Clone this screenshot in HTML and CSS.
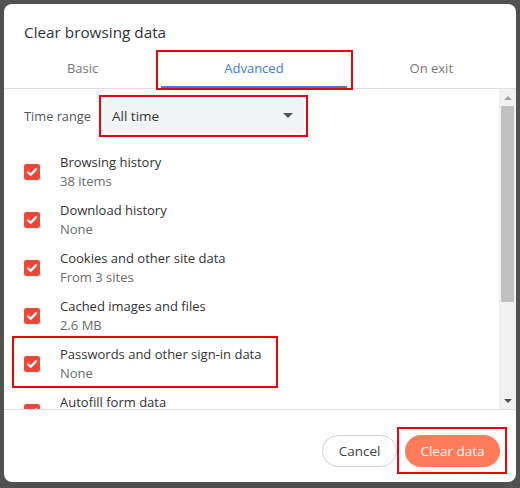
FILE: index.html
```html
<!DOCTYPE html>
<html lang="en">
<head>
  <meta charset="UTF-8" />
  <title>Clear browsing data</title>
  <link rel="stylesheet" href="styles.css">
</head>
<body>
  <div class="dialog">
    <div class="dialog-title">Clear browsing data</div>

    <div class="tabs">
      <div class="tab">Basic</div>
      <div class="tab active">Advanced<span class="mark mark-tab"></span></div>
      <div class="tab">On exit</div>
    </div>

    <div class="dialog-body">
      <div class="list">
        <div class="range-row">
          <span class="range-label">Time range</span>
          <div class="select">
            <span>All time</span>
            <span class="caret"></span>
            <span class="mark mark-select"></span>
          </div>
        </div>

        <div class="item">
          <span class="check"><svg viewBox="0 0 16 16"><path d="M4 8.3l2.6 2.5L12 5.4"/></svg></span>
          <div class="item-text"><div>Browsing history</div><div class="sub">38 items</div></div>
        </div>
        <div class="item">
          <span class="check"><svg viewBox="0 0 16 16"><path d="M4 8.3l2.6 2.5L12 5.4"/></svg></span>
          <div class="item-text"><div>Download history</div><div class="sub">None</div></div>
        </div>
        <div class="item">
          <span class="check"><svg viewBox="0 0 16 16"><path d="M4 8.3l2.6 2.5L12 5.4"/></svg></span>
          <div class="item-text"><div>Cookies and other site data</div><div class="sub">From 3 sites</div></div>
        </div>
        <div class="item">
          <span class="check"><svg viewBox="0 0 16 16"><path d="M4 8.3l2.6 2.5L12 5.4"/></svg></span>
          <div class="item-text"><div>Cached images and files</div><div class="sub">2.6 MB</div></div>
        </div>
        <div class="item">
          <span class="check"><svg viewBox="0 0 16 16"><path d="M4 8.3l2.6 2.5L12 5.4"/></svg></span>
          <div class="item-text"><div>Passwords and other sign-in data</div><div class="sub">None</div></div>
          <span class="mark mark-item"></span>
        </div>
        <div class="item item-last">
          <span class="check"><svg viewBox="0 0 16 16"><path d="M4 8.3l2.6 2.5L12 5.4"/></svg></span>
          <div class="item-text"><div>Autofill form data</div></div>
        </div>
      </div>

      <div class="scrollbar">
        <div class="sb-btn"><span class="sb-up"></span></div>
        <div class="sb-thumb"></div>
        <div class="sb-track"></div>
        <div class="sb-btn"><span class="sb-down"></span></div>
      </div>
    </div>

    <div class="dialog-footer">
      <button class="btn btn-cancel">Cancel</button>
      <button class="btn btn-clear">Clear data<span class="mark mark-btn"></span></button>
    </div>
  </div>
</body>
</html>
```

FILE: styles.css
```css
:root {
  --overlay: #515151;
  --text: #333;
  --subtext: #6b6b6b;
  --blue: #3b7be8;
  --check: #f4473b;
  --accent: #ff7b59;
  --mark: #e8050d;
}
* { box-sizing: border-box; }
body {
  margin: 0;
  background: var(--overlay);
  font-family: 'Open Sans', Lato, sans-serif;
  color: var(--text);
}
.dialog {
  margin: 4px;
  width: 512px;
  height: 478px;
  background: #fff;
  border-radius: 8px;
  display: flex;
  flex-direction: column;
  overflow: hidden;
}
.dialog-title {
  padding: 18px 20px 0;
  height: 44px;
  font-size: 15.3px;
  line-height: 20px;
  color: #333;
}
.tabs {
  display: flex;
  height: 41px;
  border-bottom: 1px solid #dedede;
}
.tab {
  flex: 1 1 auto;
  position: relative;
  text-align: center;
  font-size: 13px;
  line-height: 40px;
  color: #777;
}
.tab.active {
  color: var(--blue);
}
.tab.active::after {
  content: "";
  position: absolute;
  left: 0;
  right: 0;
  bottom: 0;
  height: 2px;
  background: var(--blue);
}
.mark {
  position: absolute;
  border: 2px solid var(--mark);
  pointer-events: none;
}
.mark-tab {
  left: -5px;
  right: -6px;
  top: 2px;
  bottom: -2px;
}
.dialog-body {
  display: flex;
  height: 321px;
  border-bottom: 1px solid #e0e0e0;
}
.list {
  flex: 1;
  overflow: hidden;
  padding-top: 10px;
}
.range-row {
  display: flex;
  align-items: center;
  height: 33px;
  margin-bottom: 16px;
  padding-left: 20px;
}
.range-label {
  width: 80px;
  font-size: 12.8px;
  color: #555;
}
.select {
  position: relative;
  width: 200px;
  height: 33px;
  background: #f1f3f4;
  border-radius: 4px;
  display: flex;
  align-items: center;
  justify-content: space-between;
  padding: 0 8px 0 8px;
  font-size: 13.5px;
  color: #333;
}
.caret {
  width: 0;
  height: 0;
  border-left: 5px solid transparent;
  border-right: 5px solid transparent;
  border-top: 5px solid #555;
  margin-right: 3px;
}
.mark-select {
  left: -5px;
  right: -4px;
  top: -4px;
  bottom: -5px;
}
.item {
  position: relative;
  display: flex;
  align-items: center;
  height: 48px;
  padding-left: 20px;
}
.item-last {
  align-items: flex-start;
  padding-top: 5px;
}
.item-last .check {
  margin-top: 11px;
}
.check {
  width: 16px;
  height: 16px;
  border-radius: 2px;
  background: var(--check);
  flex-shrink: 0;
}
.check svg {
  display: block;
  width: 16px;
  height: 16px;
  fill: none;
  stroke: #fff;
  stroke-width: 2.2;
  stroke-linecap: round;
  stroke-linejoin: round;
}
.item-text {
  margin-left: 20px;
  font-size: 13px;
  line-height: 19px;
  color: #333;
}
.item-text .sub {
  color: var(--subtext);
}
.mark-item {
  left: 8px;
  width: 266px;
  top: -4px;
  bottom: 0;
}
.scrollbar {
  width: 17px;
  background: #f1f1f1;
  display: flex;
  flex-direction: column;
}
.sb-btn {
  height: 17px;
  display: flex;
  align-items: center;
  justify-content: center;
}
.sb-up, .sb-down {
  width: 0;
  height: 0;
  border-left: 4px solid transparent;
  border-right: 4px solid transparent;
}
.sb-up { border-bottom: 4px solid #a3a3a3; }
.sb-down { border-top: 4px solid #505050; }
.sb-thumb {
  height: 196px;
  margin: 0 2px;
  background: #c1c1c1;
}
.sb-track { flex: 1; }
.dialog-footer {
  flex: 1;
  display: flex;
  justify-content: flex-end;
  align-items: center;
  gap: 8px;
  padding: 10px 16px 0;
}
.btn {
  position: relative;
  height: 32px;
  border-radius: 16px;
  font-family: inherit;
  font-size: 13.5px;
  cursor: pointer;
}
.btn-cancel {
  width: 75px;
  background: #fff;
  border: 1px solid #d2d2d8;
  color: #444;
}
.btn-clear {
  width: 95px;
  background: var(--accent);
  border: none;
  color: #fff;
}
.mark-btn {
  left: -8px;
  right: -7px;
  top: -8px;
  bottom: -7px;
}
```
